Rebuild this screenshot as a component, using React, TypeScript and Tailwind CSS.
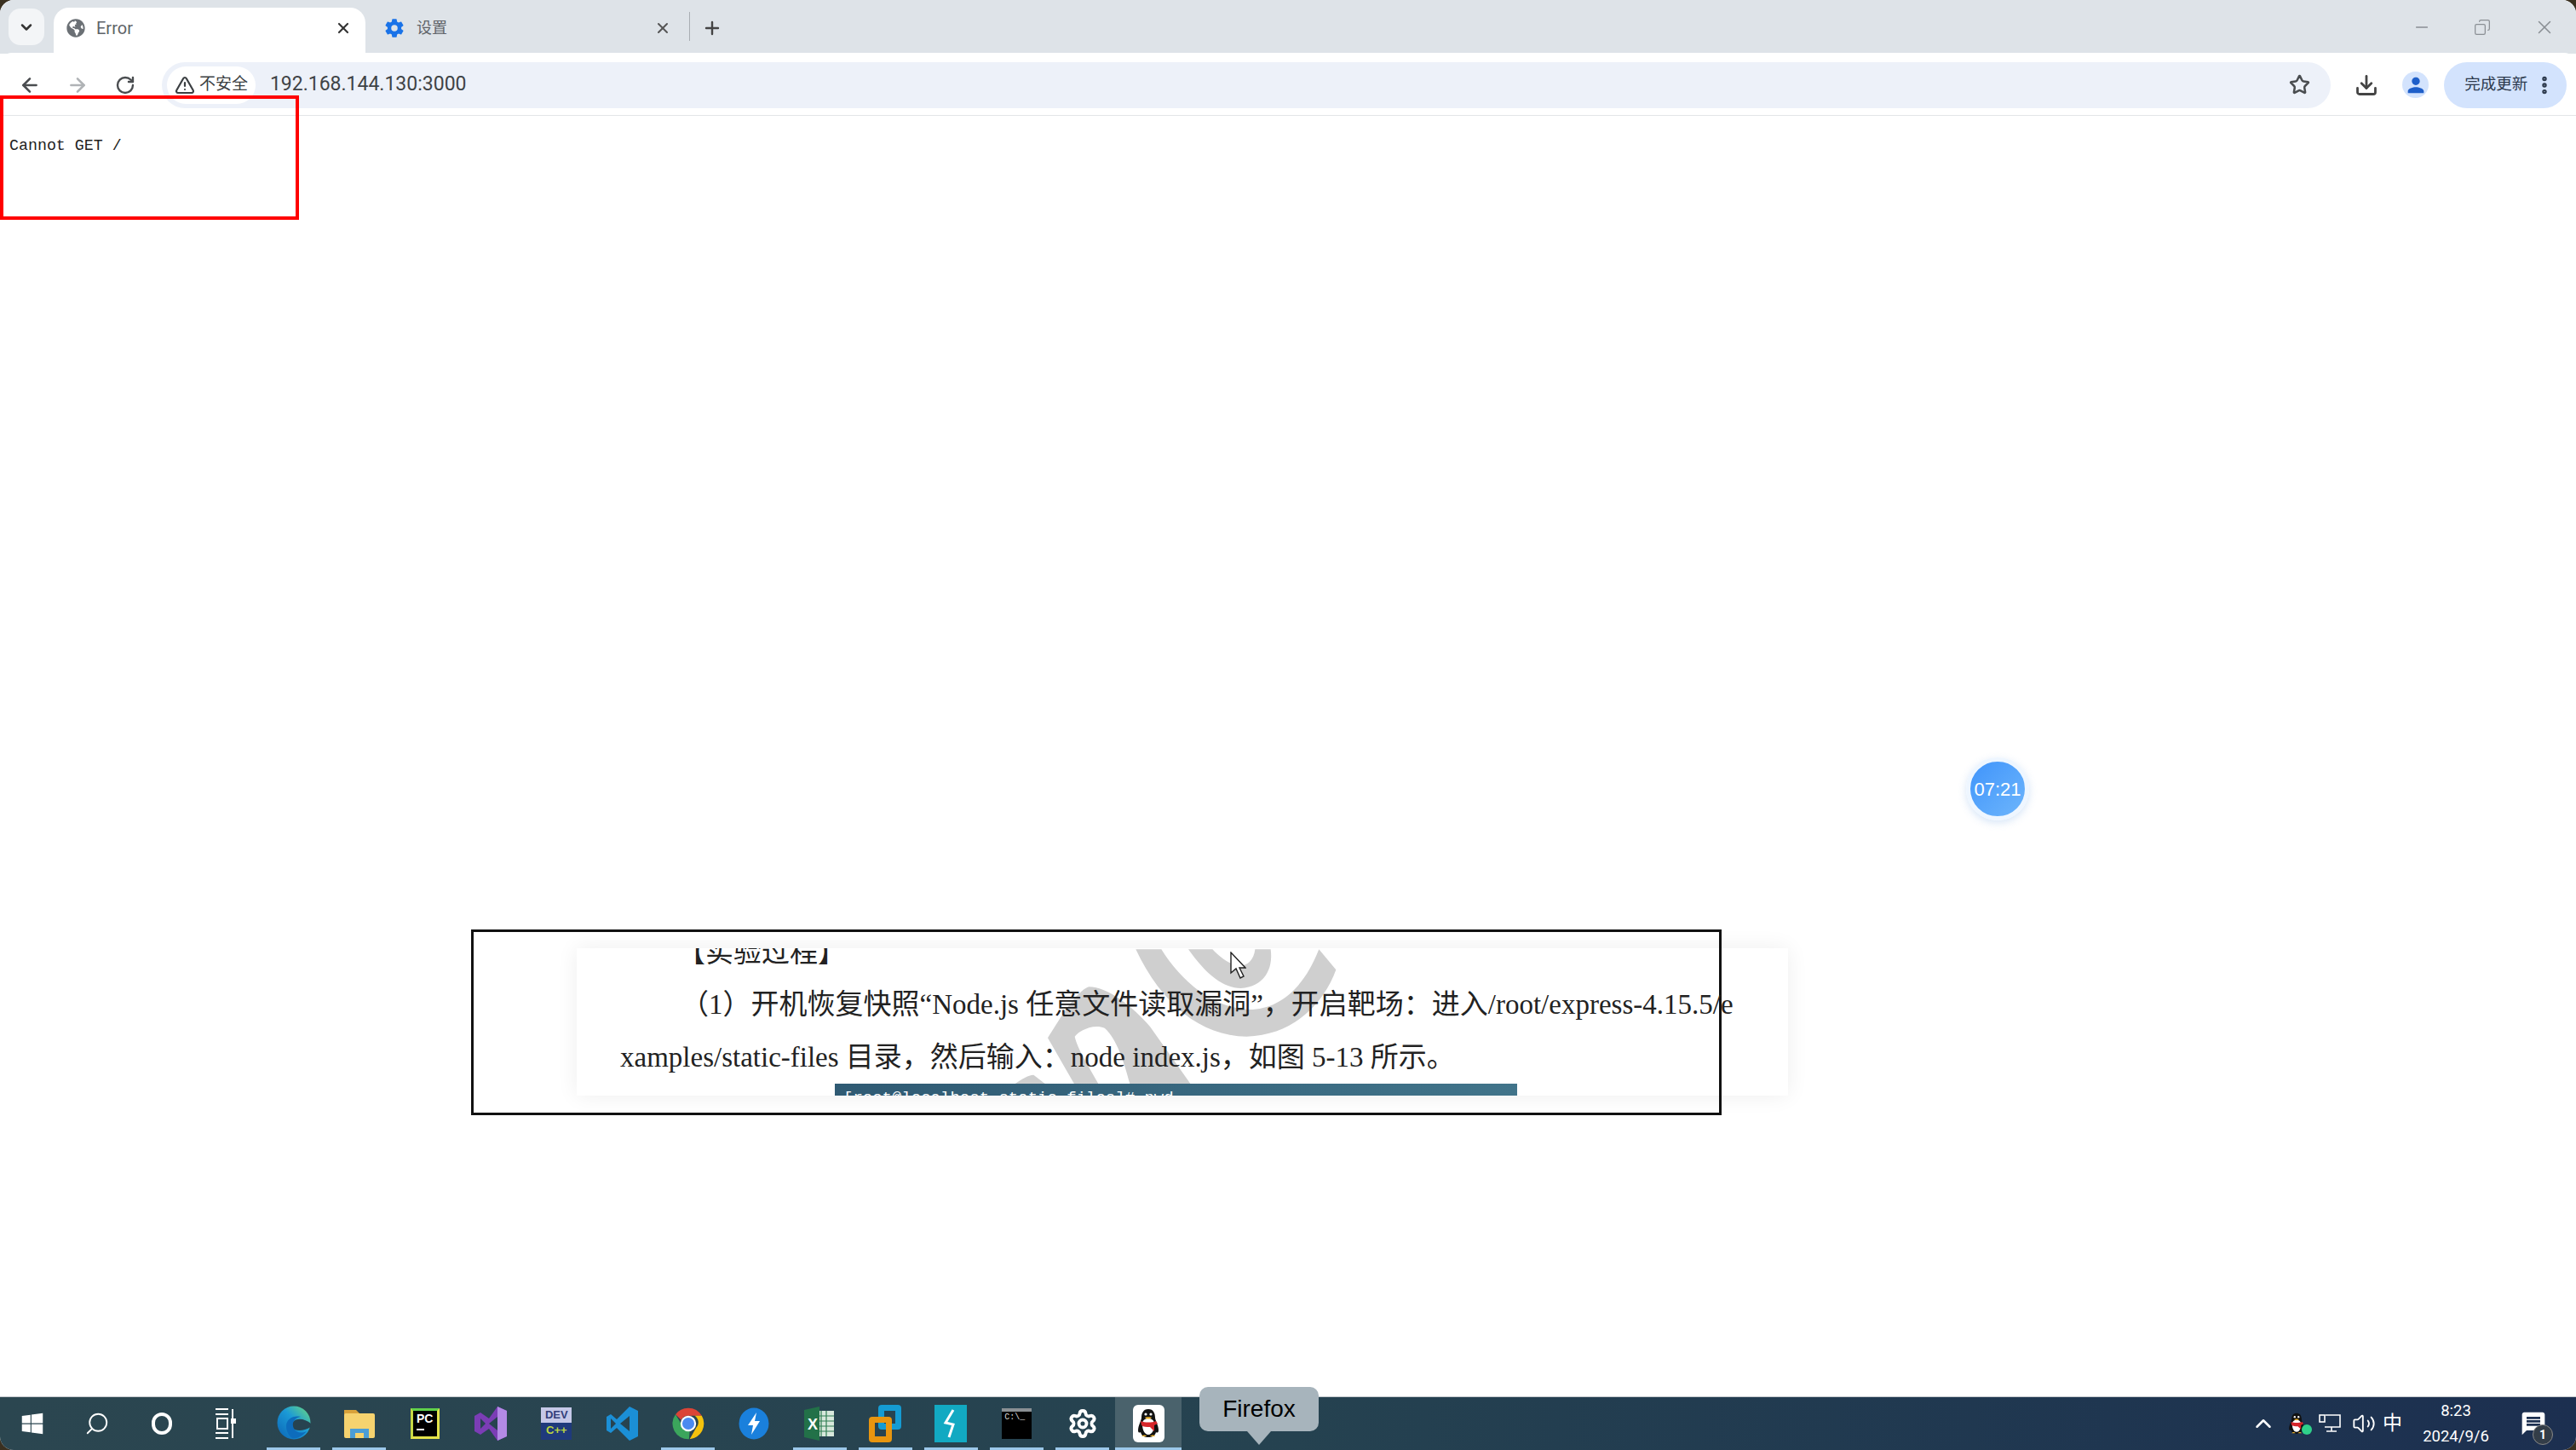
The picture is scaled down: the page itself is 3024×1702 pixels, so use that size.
import { ChevronDown, ChevronUp, Copy, Download, Minus, Plus, Search, Settings, Star, TriangleAlert, X, ArrowLeft, ArrowRight, RotateCw, EllipsisVertical, Volume2 } from "lucide-react";
import { FaGlobeAmericas, FaWindows } from "react-icons/fa";
import { IoSettingsSharp } from "react-icons/io5";
import { MdMessage, MdPerson } from "react-icons/md";

const uiFont = "font-['Roboto','Noto_Sans_CJK_SC',sans-serif]";

const EdgeIcon = () => (
   <svg width="40" height="60" viewBox="0 0 40 60">
      <defs>
         <linearGradient id="edgeA" x1="0" y1="1" x2="1" y2="0">
            <stop offset="0" stopColor="#0b63b5" />
            <stop offset="0.55" stopColor="#1b9ad6" />
            <stop offset="1" stopColor="#6fdc7c" />
         </linearGradient>
      </defs>
      <circle cx="20" cy="29" r="19.5" fill="url(#edgeA)" />
      <path d="M40 30c-6-5-15-7-20-3-4 3-3 8 1 10 5 2 12 1 19-3z" fill="#274350" />
      <path d="M11 33c0-8 8-13 17-11-6 1-10 5-9 11 1 6 8 10 16 6-5 6-12 9-17 8-4-3-7-8-7-14z" fill="#0d6cbc" />
   </svg>
);

const FolderIcon = () => (
   <svg width="38" height="60" viewBox="0 0 38 60">
      <path d="M1 14h14l4 4v3H1z" fill="#d9a23a" />
      <rect x="1" y="18" width="36" height="29" rx="2" fill="#f6d36f" />
      <path d="M8 47V36h22v11h-6v-6H14v6z" fill="#4c9ed6" />
   </svg>
);

const PyCharmIcon = () => (
   <div className="flex h-[36px] w-[34px] flex-col border-[3px] border-t-[#5fd04a] border-r-[#e4e24a] border-b-[#e4e24a] border-l-[#c7d945] bg-black pl-[4px] pt-[2px]">
      <span className="font-['Liberation_Sans',sans-serif] text-[14px] font-bold leading-[15px] text-white">PC</span>
      <span className="mt-[4px] h-[2px] w-[9px] bg-white" />
   </div>
);

const VsIcon = () => (
   <svg width="40" height="40" viewBox="0 0 40 40">
      <path d="M28 0l11 5v30l-11 5-10-14-10 7-7-4V11l7-4 10 7z" fill="#7b3db5" />
      <path d="M28 0l11 5v30l-11 5z" fill="#b48ae6" />
      <path d="M8 14v12l6-6z" fill="#274350" />
      <path d="M28 12v16l-10-8z" fill="#274350" />
   </svg>
);

const DevIcon = () => (
   <div className={`flex h-[38px] w-[36px] flex-col items-center bg-[#1f3a7c] font-['Liberation_Sans',sans-serif] text-[13px] font-bold leading-[18px]`}>
      <span className="w-full bg-[#c5c8e8] text-center text-[#33407a]">DEV</span>
      <span className="text-[#bcd63f]">C++</span>
   </div>
);

const VsCodeIcon = () => (
   <svg width="38" height="40" viewBox="0 0 38 40">
      <path d="M27 0l10 5v30l-10 5-15-15-7 6-5-3v-16l5-3 7 6z" fill="#1b8fd6" />
      <path d="M27 11v18l-11-9z" fill="#274350" />
      <path d="M5 14v12l6-6z" fill="#274350" />
   </svg>
);

const ChromeIcon = () => (
   <svg width="40" height="40" viewBox="0 0 48 48">
      <path d="M24 2a22 22 0 0 1 19 11H24a11 11 0 0 0-10 6L6 11A22 22 0 0 1 24 2z" fill="#db4437" />
      <path d="M43 13a22 22 0 0 1-17 33l9-16a11 11 0 0 0-2-17z" fill="#f4c20d" />
      <path d="M6 11l9 15a11 11 0 0 0 11 8l-1 12A22 22 0 0 1 6 11z" fill="#3ba55c" />
      <circle cx="24" cy="24" r="11" fill="#fff" />
      <circle cx="24" cy="24" r="8.5" fill="#4a8af0" />
   </svg>
);

const BoltIcon = () => (
   <svg width="36" height="38" viewBox="0 0 36 38">
      <ellipse cx="18" cy="19" rx="17.5" ry="18.5" fill="#1a80dc" />
      <path d="M21 6l-10 15h6l-2 11 10-16h-6z" fill="#fff" />
   </svg>
);

const ExcelIcon = () => (
   <svg width="36" height="40" viewBox="0 0 36 40">
      <rect x="16" y="5" width="19" height="30" fill="#d8e8dc" />
      <path d="M20 5v30M26 5v30M16 11h19M16 17h19M16 23h19M16 29h19" stroke="#2f7d52" strokeWidth="1.2" />
      <path d="M0 4l18-4v40L0 36z" fill="#227148" />
      <text x="4" y="27" fill="#fff" fontFamily="Liberation Sans" fontWeight="700" fontSize="18">X</text>
   </svg>
);

const VmwareIcon = () => (
   <div className="relative h-[44px] w-[38px]">
      <div className="absolute right-0 top-0 h-[29px] w-[27px] rounded-[4px] border-[7px] border-[#159bd2]" />
      <div className="absolute bottom-0 left-0 h-[30px] w-[27px] rounded-[4px] border-[7px] border-[#e8950f]" />
   </div>
);

const TealIcon = () => (
   <div className="flex h-[44px] w-[38px] items-center justify-center bg-[#12a9c2]">
      <svg width="20" height="34" viewBox="0 0 20 34">
         <path d="M13 1L4 16l9 2-5 15" fill="none" stroke="#fff" strokeWidth="3" />
      </svg>
   </div>
);

const CmdIcon = () => (
   <div className="flex h-[36px] w-[35px] flex-col bg-black">
      <span className="h-[4px] w-full bg-[#8a9094]" />
      <span className="pl-[3px] font-['Liberation_Mono',monospace] text-[10px] leading-[14px] text-[#d8d8d8]">C:\_</span>
   </div>
);

const Penguin = ({ size }: { size: number }) => (
   <svg width={size} height={size * 1.2} viewBox="0 0 30 36">
      <path d="M15 1c-6 0-8 5-8 10 0 3-4 9-4 15 0 3 2 3 3 2 1 4 4 6 9 6s8-2 9-6c1 1 3 1 3-2 0-6-4-12-4-15 0-5-2-10-8-10z" fill="#111" />
      <path d="M8 19c0-5 3-7 7-7s7 2 7 7-2 12-7 12-7-7-7-12z" fill="#fff" />
      <path d="M6 15c5 2 13 2 18 0l2 3-4 2v7l-5-5c-4 0-8 0-10-2z" fill="#d6262b" />
      <path d="M11 11c1-1 7-1 8 0-2 2-6 2-8 0z" fill="#f0b429" />
      <circle cx="12" cy="7" r="1.6" fill="#fff" />
      <circle cx="18" cy="7" r="1.6" fill="#fff" />
      <path d="M7 33c2-2 5-2 6 0zM17 33c2-2 5-2 6 0z" fill="#f0b429" />
   </svg>
);

const QqIcon = () => (
   <div className="flex h-[44px] w-[37px] items-center justify-center rounded-[6px] bg-white">
      <Penguin size={30} />
   </div>
);

type TaskItem = { key: string; icon: React.ReactNode; line?: boolean; active?: boolean };

const taskItems: TaskItem[] = [
   { key: "edge", icon: <EdgeIcon />, line: true },
   { key: "folder", icon: <FolderIcon />, line: true },
   { key: "pycharm", icon: <PyCharmIcon /> },
   { key: "vs", icon: <VsIcon /> },
   { key: "dev", icon: <DevIcon /> },
   { key: "vscode", icon: <VsCodeIcon /> },
   { key: "chrome", icon: <ChromeIcon />, line: true },
   { key: "bolt", icon: <BoltIcon /> },
   { key: "excel", icon: <ExcelIcon />, line: true },
   { key: "vmware", icon: <VmwareIcon />, line: true },
   { key: "teal", icon: <TealIcon />, line: true },
   { key: "cmd", icon: <CmdIcon />, line: true },
   { key: "gear", icon: <Settings size={36} strokeWidth={2.6} className="text-white" />, line: true },
   { key: "qq", icon: <QqIcon />, line: true, active: true },
];

const TaskButton = ({ item }: { item: TaskItem }) => (
   <div className={`relative flex h-full w-[77.2px] items-center justify-center ${item.active ? "bg-[#4a626c]" : ""}`}>
      {item.icon}
      {item.line && (
         <span className={`absolute bottom-0 h-[3px] bg-[#9cc8ea] ${item.active ? "inset-x-0" : "inset-x-[7px]"}`} />
      )}
   </div>
);

const Watermark = () => (
   <svg className="absolute left-[513px] top-[-8px]" width="420" height="190" viewBox="0 0 1260 570">
      <path
         fill="#cfcfcf"
         d="M430 28C520 220 660 335 820 335C1000 330 1100 200 1135 100L1075 28C1020 170 930 240 830 240C700 235 590 140 520 28Z"
      />
      <path
         fill="#cfcfcf"
         d="M615 28C680 120 740 165 800 165C880 160 915 100 905 28H850C845 70 820 90 785 85C750 75 720 50 700 28Z"
      />
      <path
         fill="#cfcfcf"
         fillRule="evenodd"
         d="M120 340C170 260 220 175 265 160C330 160 420 230 480 300L625 505H410C390 430 365 345 320 305C285 290 235 310 215 335C225 380 270 450 300 505H215Z"
      />
      <path fill="#cfcfcf" d="M0 505C20 490 50 470 70 470L115 505Z" />
   </svg>
);

const DocCard = () => (
   <div className="absolute left-[677px] top-[1113px] flex h-[173px] w-[1422px] flex-col overflow-hidden bg-white font-['Liberation_Serif','Noto_Sans_CJK_SC',serif] text-[33px] leading-[62px] text-[#222] shadow-[0_0_24px_rgba(0,0,0,0.07)]">
      <Watermark />
      <div className="relative z-10 -mt-[25px] flex flex-col whitespace-nowrap">
         <p className="pl-[118px] leading-[60px]">【实验过程】</p>
         <p className="pl-[122px]">（1）开机恢复快照“Node.js 任意文件读取漏洞”，开启靶场：进入/root/express-4.15.5/e</p>
         <p className="pl-[51px]">xamples/static-files 目录，然后输入：node index.js，如图 5-13 所示。</p>
         <div className="ml-[303px] h-[30px] w-[801px] bg-linear-to-r from-[#2f5a73] to-[#41748a] pl-[10px] pt-[7px] font-['Liberation_Mono',monospace] text-[19px] leading-[20px] text-white">
            [root@localhost static-files]# pwd
         </div>
      </div>
      <svg className="absolute left-[767px] top-[4px] z-20" width="19" height="32" viewBox="0 0 19 32">
         <path d="M1 1v24l6-5 5 11 4-2-5-10h7z" fill="#fff" stroke="#222" strokeWidth="1.4" />
      </svg>
   </div>
);

const App = () => {
   return (
      <div className="relative h-[1702px] w-[3024px] overflow-hidden bg-[#3a3020]">
         <div className={`flex h-full w-full flex-col overflow-hidden rounded-[16px] bg-white ${uiFont}`}>
            {/* tab strip */}
            <div className="flex h-[63px] shrink-0 bg-[#dee3e8] text-[#5f6368]">
               <div className="ml-[10px] mt-[10px] flex h-[43px] w-[42px] items-center justify-center rounded-[14px] bg-[#f3f5f7]">
                  <ChevronDown size={20} strokeWidth={3} className="text-[#333]" />
               </div>
               <div className="ml-[11px] mt-[9px] flex h-[54px] w-[366px] items-center rounded-t-[18px] bg-white pb-[7px] pl-[15px] pr-[16px]">
                  <FaGlobeAmericas size={22} className="text-[#6b7075]" />
                  <span className="ml-[13px] text-[20px]">Error</span>
                  <X size={20} strokeWidth={2.6} className="ml-auto text-[#333]" />
               </div>
               <div className="mt-[9px] flex h-[54px] w-[380px] items-center pb-[7px] pl-[22px] pr-[21px]">
                  <IoSettingsSharp size={24} className="text-[#1a73e8]" />
                  <span className="ml-[14px] text-[18px]">设置</span>
                  <X size={20} strokeWidth={2.4} className="ml-auto text-[#555]" />
               </div>
               <div className="mt-[14px] h-[34px] w-px bg-[#a9aeb3]" />
               <div className="mt-[9px] flex h-[54px] w-[52px] items-center justify-center pb-[7px]">
                  <Plus size={24} strokeWidth={2.4} className="text-[#444]" />
               </div>
               <div className="ml-auto mr-[24px] mt-[16px] flex h-[32px] items-center gap-[50px] text-[#8a8f94]">
                  <Minus size={22} strokeWidth={1.5} />
                  <Copy size={20} strokeWidth={1.5} className="-scale-x-100" />
                  <X size={26} strokeWidth={1.4} />
               </div>
            </div>

            {/* toolbar */}
            <div className="-mt-px flex h-[74px] shrink-0 items-center rounded-t-[14px] border-b border-[#e3e5e8] bg-white pl-[22px] pr-[11px] pt-[2px]">
               <ArrowLeft size={26} strokeWidth={2.4} className="text-[#4a4d50]" />
               <ArrowRight size={26} strokeWidth={2.4} className="ml-[30px] text-[#b0b3b6]" />
               <RotateCw size={24} strokeWidth={2.4} className="ml-[31px] text-[#4a4d50]" />
               <div className="ml-[31px] flex h-[54px] w-[2550px] items-center rounded-full bg-[#edf1f9] pl-[6px] pr-[24px]">
                  <div className="flex h-[44px] w-[104px] items-center justify-center gap-[5px] rounded-full bg-white text-[#3c4043]">
                     <TriangleAlert size={24} strokeWidth={2.2} />
                     <span className="text-[19px]">不安全</span>
                  </div>
                  <span className="ml-[17px] text-[23px] text-[#3f4346]">192.168.144.130:3000</span>
                  <Star size={25} strokeWidth={2.4} className="ml-auto text-[#4a4d50]" />
               </div>
               <Download size={28} strokeWidth={2.4} className="ml-[28px] text-[#444]" />
               <div className="ml-[28px] flex h-[31px] w-[31px] items-center justify-center rounded-full bg-[#d3e3fd]">
                  <MdPerson size={28} className="text-[#1f5fc9]" />
               </div>
               <div className="ml-[18px] flex h-[54px] w-[144px] items-center rounded-full bg-[#d3e3fd] pl-[24px] text-[#2d3a4d]">
                  <span className="text-[18.5px]">完成更新</span>
                  <EllipsisVertical size={26} strokeWidth={3} className="ml-[7px]" />
               </div>
            </div>

            {/* page */}
            <div className="flex-1 bg-white pl-[11px] pt-[23px]">
               <p className="font-['Liberation_Mono',monospace] text-[18.3px] leading-[24px] text-[#222]">Cannot GET /</p>
            </div>

            {/* taskbar */}
            <div className="flex h-[63px] shrink-0 items-center border-t border-[#c4c8cc] bg-linear-to-r from-[#2b4650] via-[#254250] via-50% to-[#1c2f50] text-white">
               <div className="flex w-[76px] justify-center">
                  <FaWindows size={28} />
               </div>
               <div className="flex w-[76px] justify-center">
                  <Search size={30} strokeWidth={1.5} className="-scale-x-100" />
               </div>
               <div className="flex w-[75px] justify-center">
                  <div className="h-[26px] w-[24px] rounded-full border-[4px] border-white" />
               </div>
               <div className="flex w-[76px] justify-center">
                  <svg width="26" height="36" viewBox="0 0 26 36" fill="none" stroke="#fff" strokeWidth="2">
                     <path d="M1 1h15M1 7h15M1 29h15M1 35h15M3 12h12v12H3zM21 1v34" />
                     <rect x="19" y="12" width="6" height="6" fill="#fff" stroke="none" />
                  </svg>
               </div>
               <div className="ml-[3px] flex h-full">
                  {taskItems.map(item => (
                     <TaskButton key={item.key} item={item} />
                  ))}
               </div>
               <div className="ml-auto flex h-full items-center pr-[30px]">
                  <ChevronUp size={30} strokeWidth={2} />
                  <div className="relative ml-[8px] flex w-[32px] justify-center">
                     <Penguin size={22} />
                     <span className="absolute bottom-[0px] right-[-2px] h-[12px] w-[12px] rounded-full bg-[#2fd08a]" />
                  </div>
                  <svg className="ml-[10px]" width="26" height="22" viewBox="0 0 26 22" fill="none" stroke="#fff" strokeWidth="1.6">
                     <path d="M8 1h17v14H7M15 15v5M9 20h12" />
                     <rect x="1" y="1" width="6" height="8" />
                  </svg>
                  <Volume2 size={28} strokeWidth={1.6} className="ml-[13px]" />
                  <span className="ml-[8px] text-[23px]">中</span>
                  <div className="ml-[18px] flex w-[90px] flex-col items-center text-[18.5px] leading-[30px]">
                     <span>8:23</span>
                     <span>2024/9/6</span>
                  </div>
                  <div className="relative ml-[30px] flex w-[36px]">
                     <MdMessage size={32} />
                     <span className="absolute -bottom-[9px] -right-[3px] flex h-[24px] w-[24px] items-center justify-center rounded-full border border-[#888] bg-[#333d48] text-[14px] font-bold">
                        1
                     </span>
                  </div>
               </div>
            </div>
         </div>

         {/* screen recording overlays */}
         <DocCard />
         <div className="absolute left-0 top-[112px] h-[146px] w-[351px] border-[4px] border-[#f00]" />
         <div className="absolute left-[553px] top-[1091px] h-[218px] w-[1468px] border-[3px] border-[#111]" />

         <div className="absolute left-[2308px] top-[889px] flex h-[74px] w-[74px] items-center justify-center rounded-full border-[5px] border-[#eef6ff] bg-linear-to-br from-[#3f94fb] to-[#6db5fb] font-['Liberation_Sans',sans-serif] text-[22px] text-white shadow-[0_3px_10px_rgba(120,170,230,0.3)]">
            07:21
         </div>

         <div className="absolute left-[1408px] top-[1628px] flex h-[52px] w-[140px] items-center justify-center rounded-[10px] bg-[#a7b4bc] font-['Liberation_Sans',sans-serif] text-[28px] text-black">
            Firefox
            <span className="absolute left-[56px] top-[52px] h-0 w-0 border-x-[14px] border-t-[16px] border-x-transparent border-t-[#a7b4bc]" />
         </div>
      </div>
   );
};

export default App;
